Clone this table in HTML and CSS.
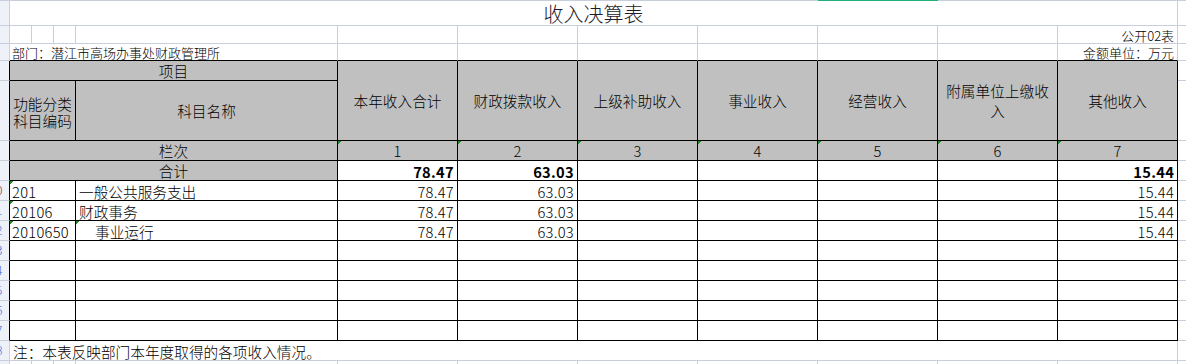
FILE: index.html
```html
<!DOCTYPE html>
<html lang="zh-CN">
<head>
<meta charset="utf-8">
<title>收入决算表</title>
<link rel="stylesheet" href="styles.css">
</head>
<body>
<table class="sheet">
  <colgroup>
    <col class="w-s"><col class="w-a"><col class="w-a"><col class="w-a"><col class="w-d">
    <col class="w-v"><col class="w-v"><col class="w-v"><col class="w-v"><col class="w-v"><col class="w-v"><col class="w-v">
    <col class="w-e">
  </colgroup>
  <tr class="r-title">
    <td class="s"></td>
    <td colspan="11" class="title">收入决算表</td>
    <td class="e"></td>
  </tr>
  <tr class="r-1">
    <td class="s"></td>
    <td></td><td></td><td></td><td></td>
    <td></td><td></td><td></td><td></td><td></td><td></td>
    <td class="small right">公开02表</td>
    <td class="e"></td>
  </tr>
  <tr class="r-2 top">
    <td class="s"></td>
    <td colspan="4" class="c small">部门：潜江市高场办事处财政管理所</td>
    <td class="c"></td><td class="c"></td><td class="c"></td><td class="c"></td><td class="c"></td><td class="c"></td>
    <td class="c small right">金额单位：万元</td>
    <td class="e"></td>
  </tr>
  <tr class="t r-20">
    <td class="s"></td>
    <td colspan="4" class="hd">项目</td>
    <td rowspan="2" class="hd">本年收入合计</td>
    <td rowspan="2" class="hd">财政拨款收入</td>
    <td rowspan="2" class="hd">上级补助收入</td>
    <td rowspan="2" class="hd">事业收入</td>
    <td rowspan="2" class="hd">经营收入</td>
    <td rowspan="2" class="hd wrap">附属单位上缴收入</td>
    <td rowspan="2" class="hd">其他收入</td>
    <td class="e"></td>
  </tr>
  <tr class="t r-60">
    <td class="s"></td>
    <td colspan="3" class="hd two">功能分类<br>科目编码</td>
    <td class="hd">科目名称</td>
    <td class="e"></td>
  </tr>
  <tr class="t r-20">
    <td class="s"></td>
    <td colspan="4" class="hd">栏次</td>
    <td class="hd num-c tri">1</td>
    <td class="hd num-c tri">2</td>
    <td class="hd num-c tri">3</td>
    <td class="hd num-c tri">4</td>
    <td class="hd num-c tri">5</td>
    <td class="hd num-c tri">6</td>
    <td class="hd num-c tri">7</td>
    <td class="e"></td>
  </tr>
  <tr class="t r-20">
    <td class="s"></td>
    <td colspan="4" class="hd">合计</td>
    <td class="num bold">78.47</td>
    <td class="num bold">63.03</td>
    <td></td><td></td><td></td><td></td>
    <td class="num bold">15.44</td>
    <td class="e"></td>
  </tr>
  <tr class="t r-20">
    <td class="s"><div class="rn rn-sel">10</div></td>
    <td colspan="3" class="code tri">201</td>
    <td class="name">一般公共服务支出</td>
    <td class="num">78.47</td>
    <td class="num">63.03</td>
    <td></td><td></td><td></td><td></td>
    <td class="num">15.44</td>
    <td class="e"></td>
  </tr>
  <tr class="t r-20">
    <td class="s"><div class="rn">11</div></td>
    <td colspan="3" class="code tri">20106</td>
    <td class="name">财政事务</td>
    <td class="num">78.47</td>
    <td class="num">63.03</td>
    <td></td><td></td><td></td><td></td>
    <td class="num">15.44</td>
    <td class="e"></td>
  </tr>
  <tr class="t r-20">
    <td class="s"><div class="rn">12</div></td>
    <td colspan="3" class="code tri">2010650</td>
    <td class="name indent tri">事业运行</td>
    <td class="num">78.47</td>
    <td class="num">63.03</td>
    <td></td><td></td><td></td><td></td>
    <td class="num">15.44</td>
    <td class="e"></td>
  </tr>
  <tr class="t r-20">
    <td class="s"><div class="rn">13</div></td>
    <td colspan="3"></td><td></td>
    <td></td><td></td><td></td><td></td><td></td><td></td><td></td>
    <td class="e"></td>
  </tr>
  <tr class="t r-20">
    <td class="s"><div class="rn">14</div></td>
    <td colspan="3"></td><td></td>
    <td></td><td></td><td></td><td></td><td></td><td></td><td></td>
    <td class="e"></td>
  </tr>
  <tr class="t r-20">
    <td class="s"><div class="rn">15</div></td>
    <td colspan="3"></td><td></td>
    <td></td><td></td><td></td><td></td><td></td><td></td><td></td>
    <td class="e"></td>
  </tr>
  <tr class="t r-20">
    <td class="s"><div class="rn">16</div></td>
    <td colspan="3"></td><td></td>
    <td></td><td></td><td></td><td></td><td></td><td></td><td></td>
    <td class="e"></td>
  </tr>
  <tr class="t r-20">
    <td class="s"><div class="rn">17</div></td>
    <td colspan="3"></td><td></td>
    <td></td><td></td><td></td><td></td><td></td><td></td><td></td>
    <td class="e"></td>
  </tr>
  <tr class="r-20">
    <td class="s"><div class="rn">18</div></td>
    <td colspan="11" class="note">注：本表反映部门本年度取得的各项收入情况。</td>
    <td class="e"></td>
  </tr>
  <tr class="r-last">
    <td class="s"></td>
    <td></td><td></td><td></td><td></td>
    <td></td><td></td><td></td><td></td><td></td><td></td><td></td>
    <td class="e"></td>
  </tr>
</table>
<div class="colsel"></div>
</body>
</html>
```

FILE: styles.css
```css
html, body {
  margin: 0;
  padding: 0;
  background: #ffffff;
  overflow: hidden;
}

body {
  font-family: "Noto Sans CJK SC", "Noto Sans", sans-serif;
  font-size: 14.6667px;
  font-weight: 300;
  color: #000;
  position: relative;
}

.sheet {
  border-collapse: separate;
  border-spacing: 0;
  table-layout: fixed;
  width: 1186px;
}

.w-s { width: 10px; }
.w-a { width: 22px; }
.w-d { width: 262px; }
.w-v { width: 120px; }
.w-e { width: 8px; }

.sheet td {
  box-sizing: border-box;
  padding: 0 2px;
  border-right: 1px solid #c8cedc;
  border-bottom: 1px solid #c8cedc;
  white-space: nowrap;
  overflow: hidden;
  vertical-align: bottom;
  line-height: 16px;
}

.r-title td { border-top: 1px solid #c8cedc; }
.r-title, .r-title td { height: 26px; }
.r-1, .r-1 td { height: 18px; }
.r-2, .r-2 td { height: 17px; }
.r-20, .r-20 td { height: 20px; }
.r-60, .r-60 td { height: 60px; }
.r-last, .r-last td { height: 4px; }

.sheet td[rowspan] { height: 80px; }

.sheet td.e { border-right: none; padding: 0; }
.sheet td.s { padding: 0; background: #eef1f7; }

.top td.c { border-bottom-color: #000; }

.t td { border-right-color: #000; border-bottom-color: #000; }
.t td.s { border-bottom-color: #c8cedc; border-right-color: #000; }
.t td.e { border-bottom-color: #c8cedc; }

.sheet td.title {
  text-align: center;
  font-size: 20px;
  line-height: 22px;
  color: #1c1c2a;
  padding: 0;
}

.sheet td.small {
  font-size: 13px;
  line-height: 15px;
}

.right { text-align: right; }
.sheet td.right { padding-right: 3px; }

.sheet td.hd {
  background-color: #c0c0c0;
  text-align: center;
  vertical-align: middle;
}

.sheet td.wrap {
  white-space: normal;
  padding: 0 6px;
  line-height: 20px;
}

.sheet td.two {
  white-space: normal;
  line-height: 17px;
  padding: 3px 0 0 0;
}

.num, .num-c, .code {
  font-family: "Noto Sans CJK SC", "Noto Sans", sans-serif;
  font-variant-numeric: tabular-nums;
  letter-spacing: 0.3px;
}

.sheet td.num {
  text-align: right;
  padding-right: 3px;
}

.bold { font-weight: 700; }

.sheet td.code { padding-left: 2px; }
.sheet td.name { padding-left: 3px; }
.sheet td.indent { padding-left: 19px; }
.sheet td.note { padding-left: 3px; }

.sheet td.tri {
  background-image: linear-gradient(135deg, #1e8a1e 0, #1e8a1e 50%, transparent 50%);
  background-size: 4px 4px;
  background-repeat: no-repeat;
  background-position: 0 0;
}

.rn {
  display: flex;
  justify-content: flex-end;
  overflow: hidden;
  width: 9px;
  padding-right: 6px;
  box-sizing: border-box;
  font-family: "DejaVu Sans", sans-serif;
  font-size: 13px;
  line-height: 18px;
  color: #3a62d8;
}

.rn-sel { color: #8a2030; }

.colsel {
  position: absolute;
  top: 0;
  left: 818px;
  width: 120px;
  height: 1px;
  background: #22b07a;
}
```
